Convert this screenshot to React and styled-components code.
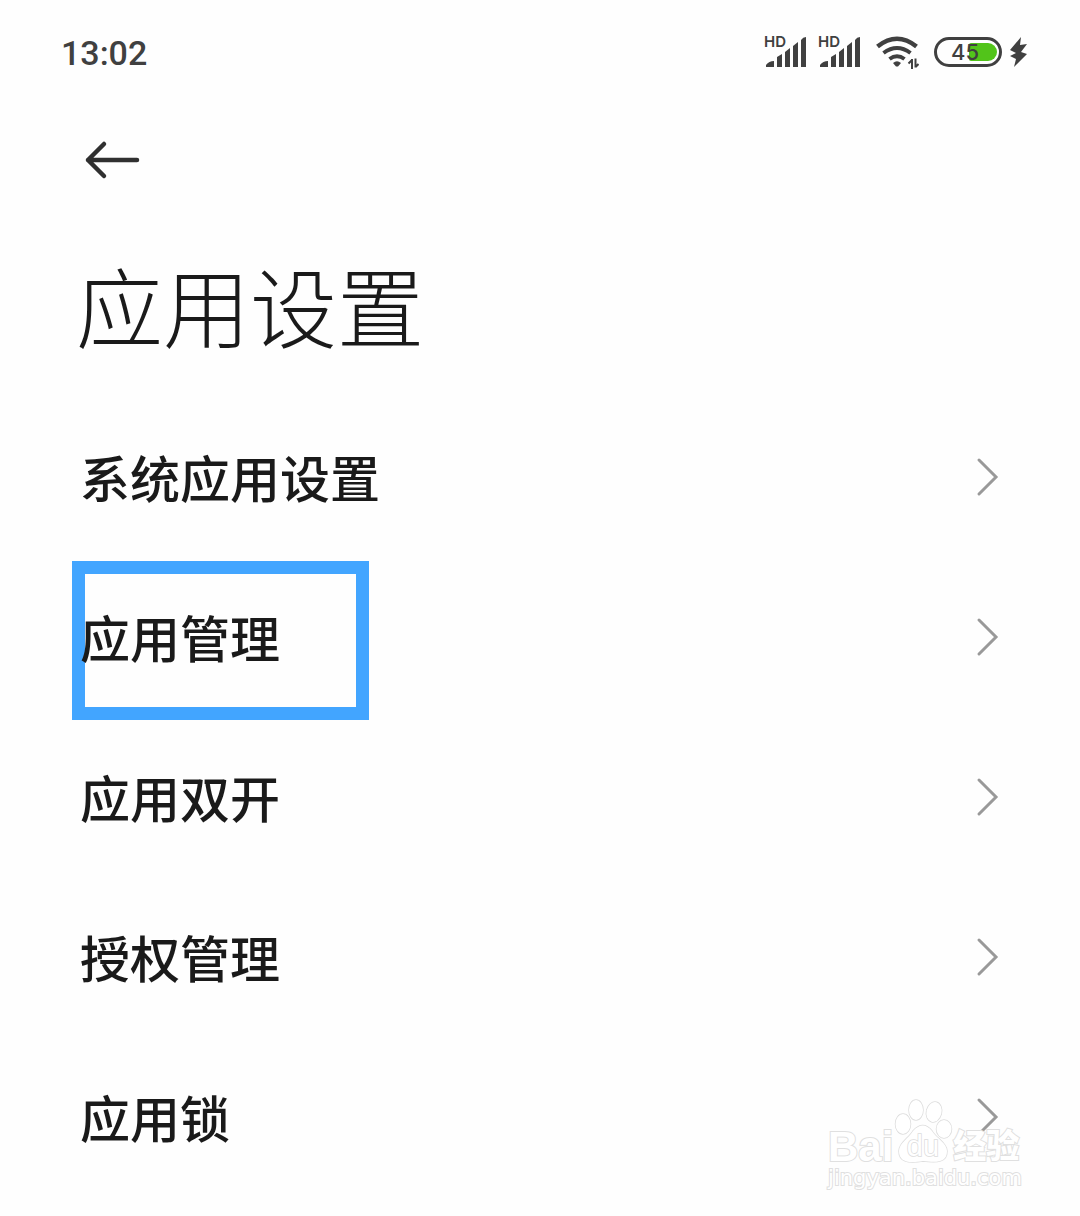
import React from "react";
import styled, { createGlobalStyle } from "styled-components";

const GlobalStyle = createGlobalStyle`
  * { box-sizing: border-box; }
  body {
    margin: 0;
    background: #fefefe;
    color: #1a1a1a;
    font-family: "Noto Sans CJK SC", "Noto Sans", sans-serif;
  }
`;

const Screen = styled.div`
  position: relative;
  min-height: 100vh;
  overflow: hidden;
`;

const StatusBar = styled.header`
  display: flex;
  align-items: center;
  justify-content: space-between;
  height: 104px;
  padding: 0 52px 0 61px;
  color: #404040;
`;

const Clock = styled.time`
  padding-top: 2px;
  font: 500 34px/48px Roboto, sans-serif;
`;

const StatusIcons = styled.div`
  display: flex;
  align-items: center;
`;

const SignalBox = styled.span`
  position: relative;
  display: block;
  width: 42px;
  height: 32px;
  margin-right: 12px;
`;

const SignalLabel = styled.span`
  position: absolute;
  top: -2px;
  left: -1px;
  font: 600 15px/16px Inter, sans-serif;
`;

const Glyph = styled.svg`
  display: block;
  flex: none;
`;

const WifiGlyph = styled(Glyph)`
  margin: 0 15px 0 3px;
`;

const BatteryBox = styled.span`
  display: flex;
  align-items: center;
  justify-content: flex-end;
  position: relative;
  width: 68px;
  height: 30px;
  margin-right: 7px;
  padding: 2px;
  border: 3px solid #404040;
  border-radius: 15px;
`;

const BatteryFill = styled.span`
  width: 28px;
  height: 18px;
  border-radius: 2px 9px 9px 2px;
  background: #52c41a;
`;

const BatteryLevel = styled.span`
  position: absolute;
  inset: 0;
  padding-left: 14px;
  font: 500 22px/25px Inter, sans-serif;
`;

const NavBar = styled.nav`
  display: flex;
  align-items: center;
  height: 112px;
  padding: 0 80px;
`;

const BackButton = styled.button`
  padding: 8px 4px;
  border: 0;
  background: none;
  color: #303030;
  cursor: pointer;
`;

const Title = styled.h1`
  margin: 0;
  padding: 24px 76px 29px;
  font-size: 87px;
  line-height: 128px;
  font-weight: 300;
`;

const List = styled.ul`
  margin: 0;
  padding: 0;
  list-style: none;
`;

const Row = styled.a`
  position: relative;
  display: flex;
  align-items: center;
  justify-content: space-between;
  height: 160px;
  padding: 0 80px;
  color: inherit;
  font-size: 50px;
  line-height: 72px;
  font-weight: 500;
  text-decoration: none;
`;

const Highlight = styled.span`
  position: absolute;
  top: 4px;
  left: 72px;
  width: 297px;
  height: 159px;
  border: 13px solid #42a5ff;
`;

const RowLabel = styled.span`
  position: relative;
  padding-bottom: 2px;
`;

const Watermark = styled.div`
  position: absolute;
  right: 58px;
  bottom: 24px;
  width: 194px;
  color: #fff;
  paint-order: stroke fill;
  -webkit-text-stroke: 2px #e0e0e0;
  pointer-events: none;
`;

const Brand = styled.div`
  display: flex;
  align-items: flex-end;
  justify-content: space-between;
  height: 66px;
  padding-right: 3px;
`;

const BrandName = styled.span`
  font: 700 42px/34px "Liberation Sans", Arial, sans-serif;
`;

const BrandTopic = styled.span`
  flex: none;
  font-size: 33px;
  line-height: 40px;
  font-weight: 900;
  white-space: nowrap;
`;

const Site = styled.div`
  font: 400 21px/28px "DejaVu Sans", sans-serif;
  text-align: center;
  white-space: nowrap;
`;

const Signal = () => (
  <SignalBox>
    <SignalLabel>HD</SignalLabel>
    <Glyph width="42" height="32" viewBox="0 0 42 32" fill="currentColor" aria-hidden="true">
      <path d="M1 31v-2q3-4 8-4v6zM12 31V21l5-3v13zM20 31V16l5-4v19zM28 31V10l5-4v25zM36 31V4q2-3 5-3v30z" />
    </Glyph>
  </SignalBox>
);

const Wifi = () => (
  <WifiGlyph width="43" height="34" viewBox="0 0 43 34" fill="none" stroke="currentColor" strokeWidth="4" aria-hidden="true">
    <path d="M1.500 11.500Q21-4 40.500 11.500" strokeWidth="4.500" />
    <path d="M7.500 18Q21 8 34.500 18M13.500 24Q21 18.500 28.500 24" />
    <path d="M17 28q4-3.500 8 0l-3 3.500h-2z" fill="currentColor" stroke="none" />
    <path d="M36 24v10M32.500 28.500l3-3M39.500 23.500v9M39.500 32l3-3" strokeWidth="2" />
  </WifiGlyph>
);

const Battery = ({ level }) => (
  <BatteryBox>
    <BatteryFill />
    <BatteryLevel>{level}</BatteryLevel>
  </BatteryBox>
);

const Bolt = () => (
  <Glyph width="19" height="32" viewBox="0 0 19 32" fill="currentColor" aria-hidden="true">
    <path d="M12 1 1 14l6 3-6 3 6 3-2 8 13-13-6-2 6-8-7 1z" />
  </Glyph>
);

const Arrow = () => (
  <Glyph width="56" height="40" viewBox="0 0 56 40" fill="none" stroke="currentColor" strokeWidth="4.500" strokeLinecap="round" strokeLinejoin="round" aria-hidden="true">
    <path d="M20 4 4 20l16 16M4 20h49" />
  </Glyph>
);

const Chevron = () => (
  <Glyph width="24" height="40" viewBox="0 0 24 40" fill="none" stroke="#999" strokeWidth="3" strokeLinecap="round" aria-hidden="true">
    <path d="m3 3 17 17L3 37" />
  </Glyph>
);

const Paw = () => (
  <Glyph width="60" height="66" viewBox="0 0 60 66" fill="#fff" stroke="#dcdcdc" strokeWidth="1.500" aria-hidden="true">
    <ellipse cx="10" cy="26" rx="7.500" ry="10" />
    <ellipse cx="23" cy="12" rx="7" ry="10" />
    <ellipse cx="41" cy="14" rx="7.500" ry="10" transform="rotate(14 41 14)" />
    <ellipse cx="51" cy="31" rx="7.500" ry="9" />
    <path d="M20 33q10-11 19 0c4 7 15 12 15 20 0 11-9 12-24 10-16 3-24 0-24-10 0-8 10-13 14-20z" />
    <text x="30" y="58" textAnchor="middle" fontFamily="Liberation Sans, Arial, sans-serif" fontSize="29">du</text>
  </Glyph>
);

const items = [
  { label: "系统应用设置" },
  { label: "应用管理", marked: true },
  { label: "应用双开" },
  { label: "授权管理" },
  { label: "应用锁" },
];

export default function App() {
  return (
    <Screen>
      <GlobalStyle />
      <StatusBar>
        <Clock>13:02</Clock>
        <StatusIcons>
          <Signal />
          <Signal />
          <Wifi />
          <Battery level={45} />
          <Bolt />
        </StatusIcons>
      </StatusBar>
      <NavBar>
        <BackButton type="button" aria-label="返回">
          <Arrow />
        </BackButton>
      </NavBar>
      <main>
        <Title>应用设置</Title>
        <List>
          {items.map((item) => (
            <li key={item.label}>
              <Row href="#">
                {item.marked && <Highlight />}
                <RowLabel>{item.label}</RowLabel>
                <Chevron />
              </Row>
            </li>
          ))}
        </List>
      </main>
      <Watermark>
        <Brand>
          <BrandName>Bai</BrandName>
          <Paw />
          <BrandTopic>经验</BrandTopic>
        </Brand>
        <Site>jingyan.baidu.com</Site>
      </Watermark>
    </Screen>
  );
}
